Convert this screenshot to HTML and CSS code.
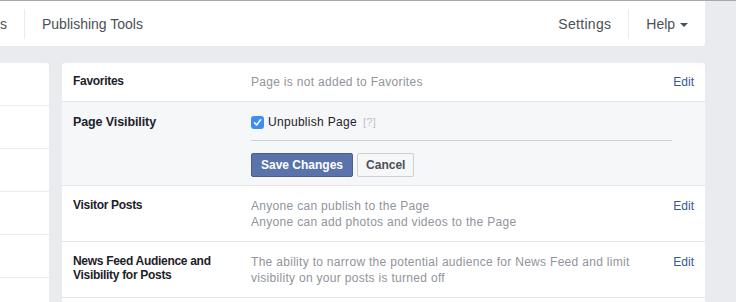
FILE: index.html
```html
<!DOCTYPE html>
<html lang="en">
<head>
    <meta charset="UTF-8">
    <meta name="viewport" content="width=device-width, initial-scale=1.0">
    <title>Page Settings</title>
    <link rel="stylesheet" href="styles.css">
</head>
<body>
    <nav class="topnav">
        <div class="tabs">
            <a class="tab">s</a>
            <a class="tab">Publishing Tools</a>
        </div>
        <div class="tabs">
            <a class="tab">Settings</a>
            <a class="tab">Help <span class="caret"></span></a>
        </div>
    </nav>

    <div class="layout">
        <aside class="sidebar">
            <div class="side-row"></div>
            <div class="side-row"></div>
            <div class="side-row"></div>
            <div class="side-row"></div>
            <div class="side-row"></div>
            <div class="side-row"></div>
        </aside>

        <main class="settings">
            <div class="row">
                <div class="label">Favorites</div>
                <div class="value">Page is not added to Favorites</div>
                <a class="edit">Edit</a>
            </div>
            <div class="row open">
                <div class="label big">Page Visibility</div>
                <div class="value">
                    <label class="check">
                        <span class="box">
                            <svg width="9" height="9" viewBox="0 0 9 9"><path d="M1.5 4.8 L3.6 6.9 L7.6 1.8" fill="none" stroke="#fff" stroke-width="1.6" stroke-linecap="round" stroke-linejoin="round"/></svg>
                        </span>
                        Unpublish Page <span class="hint">[?]</span>
                    </label>
                    <div class="actions">
                        <button class="btn primary">Save Changes</button>
                        <button class="btn">Cancel</button>
                    </div>
                </div>
            </div>
            <div class="row">
                <div class="label">Visitor Posts</div>
                <div class="value">Anyone can publish to the Page<br>Anyone can add photos and videos to the Page</div>
                <a class="edit">Edit</a>
            </div>
            <div class="row">
                <div class="label">News Feed Audience and Visibility for Posts</div>
                <div class="value">The ability to narrow the potential audience for News Feed and limit visibility on your posts is turned off</div>
                <a class="edit">Edit</a>
            </div>
            <div class="row">
                <div class="label">&nbsp;</div>
                <div class="value"></div>
            </div>
        </main>
    </div>
</body>
</html>
```

FILE: styles.css
```css
body {
    margin: 0;
    background: #e9ebee;
    border-top: 1px solid #a4a7ac;
    font-family: "Liberation Sans", Arial, sans-serif;
    font-size: 12px;
    color: #1d2129;
    height: 301px;
    overflow: hidden;
}
.topnav {
    width: 705px;
    height: 45px;
    background: white;
    border-radius: 0 0 3px 0;
    display: flex;
    justify-content: space-between;
    align-items: center;
}
.tabs {
    display: flex;
    align-items: center;
}
.tab {
    font-size: 14px;
    color: #4b4f56;
    padding: 0 17px;
    line-height: 30px;
    border-left: 1px solid #e9ebee;
}
.tabs .tab:first-child {
    border-left: none;
}
.tabs:first-child .tab:first-child {
    padding-left: 0;
}
.tabs:last-child .tab:first-child {
    letter-spacing: 0.3px;
}
.tabs:last-child .tab:last-child {
    padding-right: 17px;
}
.caret {
    display: inline-block;
    border-left: 4px solid transparent;
    border-right: 4px solid transparent;
    border-top: 4px solid #4b4f56;
    vertical-align: middle;
    margin-left: 1px;
}
.layout {
    display: flex;
    gap: 13px;
    margin-top: 17px;
}
.sidebar {
    width: 49px;
    background: white;
    border-radius: 0 3px 0 0;
}
.side-row {
    height: 42px;
    border-bottom: 1px solid #e9ebee;
}
.settings {
    width: 643px;
    background: white;
    border-radius: 3px 3px 0 0;
}
.row {
    display: flex;
    padding: 11px;
    border-top: 1px solid #e5e5e5;
    line-height: 16px;
}
.row:first-child {
    border-top: none;
}
.row + .row:not(.open) {
    padding: 12px 11px 11px 11px;
}
.label {
    width: 178px;
    font-weight: bold;
    letter-spacing: -0.3px;
    line-height: 14px;
    flex-shrink: 0;
    padding-right: 16px;
    box-sizing: border-box;
}
.label.big {
    font-size: 12.5px;
    letter-spacing: -0.1px;
    line-height: 16px;
}
.value {
    flex: 1;
    color: #90949c;
    letter-spacing: 0.3px;
    padding-right: 30px;
}
.edit {
    color: #365899;
}
.open {
    background: #f6f7f9;
    padding: 12px 11px 8px 11px;
}
.open .value {
    padding-right: 22px;
}
.check {
    display: flex;
    align-items: center;
    gap: 4px;
    color: #1d2129;
    font-size: 12px;
    padding-bottom: 10px;
    border-bottom: 1px solid #ccd0d5;
}
.box {
    width: 13px;
    height: 13px;
    border-radius: 3px;
    background: #3d8ef3;
    display: flex;
    align-items: center;
    justify-content: center;
}
.hint {
    color: #bec2c9;
    font-size: 11px;
    margin-left: 2px;
}
.actions {
    display: flex;
    gap: 4px;
    margin-top: 12px;
}
.btn {
    font-family: inherit;
    font-size: 12px;
    font-weight: bold;
    letter-spacing: 0;
    height: 24px;
    padding: 0 8px;
    border: 1px solid #ced0d4;
    border-radius: 2px;
    background: #f6f7f9;
    color: #4b4f56;
}
.btn.primary {
    background: #5a74ab;
    border-color: #4a5f8e;
    color: white;
    padding: 0 9px;
}
```
